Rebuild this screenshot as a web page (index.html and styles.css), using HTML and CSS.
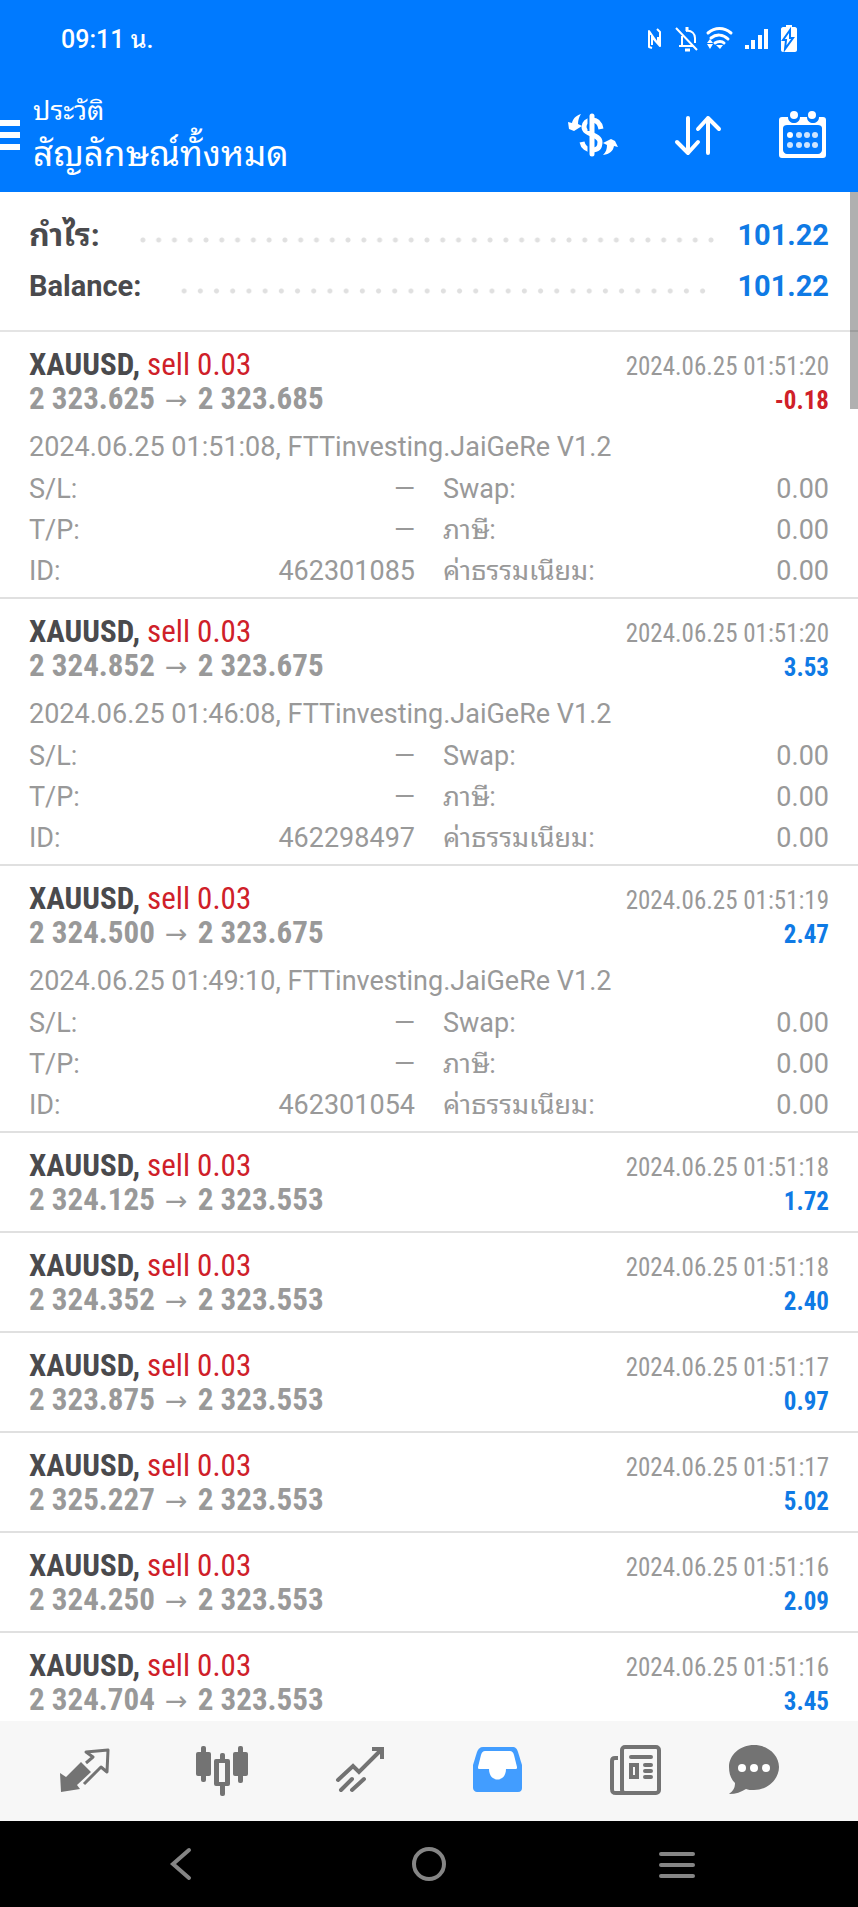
FILE: index.html
```html
<!DOCTYPE html>
<html lang="th">
<head>
<meta charset="utf-8">
<meta name="viewport" content="width=device-width, initial-scale=1">
<title>ประวัติ</title>
<link rel="stylesheet" href="styles.css">
</head>
<body>
<header class="top">
  <div class="status">
    <span class="clock">09:11 น.</span>
    <svg class="status-icons" width="152" height="30" viewBox="0 0 152 30" fill="none" stroke="#fff" stroke-width="2" aria-hidden="true">
      <path d="M7 24l-3-1V7l9 13v-7M7 13l8 9V8l-3-3M7 11v10" stroke-linejoin="round"/>
      <path d="M34 22h14M37 21v-9M41 7c6-1 9 3 9 7v5M31 4l21 22"/>
      <path d="M40 26h5M42 3v4" stroke-width="3"/>
      <path d="M63 9c7-6 16-6 23 0M66 14c5-4 12-4 17 1M70 19c3-2 7-2 9 0" stroke-width="3" stroke-linecap="round"/>
      <path d="M62 19l3-4 3 4zM62 20l3 5 3-5zM71 21h7l-3 4z" fill="#fff" stroke="none"/>
      <path d="M100 21h4v4h-4zM106 16h4v9h-4zM113 11h4v14h-4zM119 5h4v20h-4z" fill="#fff" stroke="none"/>
      <path d="M136 5c0-1 1-2 2-2h3V1h6v2h3c1 0 2 1 2 2v21c0 1-1 2-2 2h-12c-1 0-2-1-2-2z" fill="#fff" stroke="none"/>
      <path d="M145 6l-7 10h3l-1 9 8-11h-3z" fill="#fff" stroke="#007aff" stroke-width="2"/>
    </svg>
  </div>
  <div class="bar">
    <button class="menu" type="button" aria-label="Menu"><span></span><span></span><span></span></button>
    <div class="heading"><p class="kicker">ประวัติ</p><h1>สัญลักษณ์ทั้งหมด</h1></div>
    <div class="actions">
      <button class="act" type="button" aria-label="Currency"><svg width="52" height="48" viewBox="0 0 52 48" fill="none" stroke="#fff"><path d="M35 18c-1-6-4-9-9-9-5 0-8 3-8 7 0 8 16 7 16 15 0 6-3 8-8 8-5 0-9-3-10-8" stroke-width="5"/><path d="M23 3v17M23 27v17" stroke="#007aff" stroke-width="3"/><path d="M26 5v38" stroke-width="5" stroke-linecap="round"/><path d="M15 3c-6 2-8 5-9 9l-4-1 1 7 5 2 8-5-4-2c0-4 1-7 3-10zM37 44c7-1 10-4 11-9l4 1-3-6-4-2-8 4 4 2c0 4-1 7-4 10z" fill="#fff" stroke="none"/></svg></button>
      <button class="act" type="button" aria-label="Sort"><svg width="52" height="48" viewBox="0 0 52 48" fill="none" stroke="#fff" stroke-width="4" stroke-linecap="round" stroke-linejoin="round"><path d="M16 7v35M5 31l11 11 10-11M36 42V7M26 18L36 7l11 11"/></svg></button>
      <button class="act" type="button" aria-label="Calendar"><svg width="52" height="52" viewBox="0 0 52 52"><path fill="#fff" fill-rule="evenodd" d="M6 8h4c0 8 12 8 12 0h7c0 8 12 8 12 0h4c2 0 3 1 3 3v35c0 2-1 3-3 3H4c-2 0-3-1-3-3V11c0-2 1-3 3-3zM9 16c-2 0-4 1-4 3v22c0 2 2 4 4 4h31c2 0 4-2 4-4V19c0-2-2-3-4-3z"/><g fill="#fff"><circle cx="16" cy="6" r="4"/><circle cx="34" cy="6" r="4"/><circle cx="12" cy="26" r="3"/><circle cx="21" cy="26" r="3" opacity=".8"/><circle cx="29" cy="26" r="3" opacity=".8"/><circle cx="37" cy="26" r="3" opacity=".8"/><circle cx="12" cy="36" r="3" opacity=".8"/><circle cx="21" cy="36" r="3" opacity=".8"/><circle cx="29" cy="36" r="3" opacity=".8"/><circle cx="37" cy="36" r="3" opacity=".8"/></g></svg></button>
    </div>
  </div>
</header>
<main class="history">
  <section class="summary">
    <div class="sum"><span class="sum-label thai">กำไร:</span><span class="dots"></span><span class="sum-value">101.22</span></div>
    <div class="sum"><span class="sum-label">Balance:</span><span class="dots dots-short"></span><span class="sum-value">101.22</span></div>
  </section>
  <article class="deal detailed">
    <div class="line"><span class="symbol"><b>XAUUSD,</b> <span class="side">sell 0.03</span></span><time>2024.06.25 01:51:20</time></div>
    <div class="line"><span class="prices">2 323.625 <i>→</i> 2 323.685</span><span class="result loss">-0.18</span></div>
    <p class="comment">2024.06.25 01:51:08, FTTinvesting.JaiGeRe V1.2</p>
    <dl class="details">
      <div><dt>S/L:</dt><dd>—</dd></div><div><dt>Swap:</dt><dd>0.00</dd></div>
      <div><dt>T/P:</dt><dd>—</dd></div><div><dt>ภาษี:</dt><dd>0.00</dd></div>
      <div><dt>ID:</dt><dd>462301085</dd></div><div><dt>ค่าธรรมเนียม:</dt><dd>0.00</dd></div>
    </dl>
  </article>
  <article class="deal detailed">
    <div class="line"><span class="symbol"><b>XAUUSD,</b> <span class="side">sell 0.03</span></span><time>2024.06.25 01:51:20</time></div>
    <div class="line"><span class="prices">2 324.852 <i>→</i> 2 323.675</span><span class="result">3.53</span></div>
    <p class="comment">2024.06.25 01:46:08, FTTinvesting.JaiGeRe V1.2</p>
    <dl class="details">
      <div><dt>S/L:</dt><dd>—</dd></div><div><dt>Swap:</dt><dd>0.00</dd></div>
      <div><dt>T/P:</dt><dd>—</dd></div><div><dt>ภาษี:</dt><dd>0.00</dd></div>
      <div><dt>ID:</dt><dd>462298497</dd></div><div><dt>ค่าธรรมเนียม:</dt><dd>0.00</dd></div>
    </dl>
  </article>
  <article class="deal detailed">
    <div class="line"><span class="symbol"><b>XAUUSD,</b> <span class="side">sell 0.03</span></span><time>2024.06.25 01:51:19</time></div>
    <div class="line"><span class="prices">2 324.500 <i>→</i> 2 323.675</span><span class="result">2.47</span></div>
    <p class="comment">2024.06.25 01:49:10, FTTinvesting.JaiGeRe V1.2</p>
    <dl class="details">
      <div><dt>S/L:</dt><dd>—</dd></div><div><dt>Swap:</dt><dd>0.00</dd></div>
      <div><dt>T/P:</dt><dd>—</dd></div><div><dt>ภาษี:</dt><dd>0.00</dd></div>
      <div><dt>ID:</dt><dd>462301054</dd></div><div><dt>ค่าธรรมเนียม:</dt><dd>0.00</dd></div>
    </dl>
  </article>
  <article class="deal">
    <div class="line"><span class="symbol"><b>XAUUSD,</b> <span class="side">sell 0.03</span></span><time>2024.06.25 01:51:18</time></div>
    <div class="line"><span class="prices">2 324.125 <i>→</i> 2 323.553</span><span class="result">1.72</span></div>
  </article>
  <article class="deal">
    <div class="line"><span class="symbol"><b>XAUUSD,</b> <span class="side">sell 0.03</span></span><time>2024.06.25 01:51:18</time></div>
    <div class="line"><span class="prices">2 324.352 <i>→</i> 2 323.553</span><span class="result">2.40</span></div>
  </article>
  <article class="deal">
    <div class="line"><span class="symbol"><b>XAUUSD,</b> <span class="side">sell 0.03</span></span><time>2024.06.25 01:51:17</time></div>
    <div class="line"><span class="prices">2 323.875 <i>→</i> 2 323.553</span><span class="result">0.97</span></div>
  </article>
  <article class="deal">
    <div class="line"><span class="symbol"><b>XAUUSD,</b> <span class="side">sell 0.03</span></span><time>2024.06.25 01:51:17</time></div>
    <div class="line"><span class="prices">2 325.227 <i>→</i> 2 323.553</span><span class="result">5.02</span></div>
  </article>
  <article class="deal">
    <div class="line"><span class="symbol"><b>XAUUSD,</b> <span class="side">sell 0.03</span></span><time>2024.06.25 01:51:16</time></div>
    <div class="line"><span class="prices">2 324.250 <i>→</i> 2 323.553</span><span class="result">2.09</span></div>
  </article>
  <article class="deal">
    <div class="line"><span class="symbol"><b>XAUUSD,</b> <span class="side">sell 0.03</span></span><time>2024.06.25 01:51:16</time></div>
    <div class="line"><span class="prices">2 324.704 <i>→</i> 2 323.553</span><span class="result">3.45</span></div>
  </article>
  <span class="thumb"></span>
</main>
<nav class="tabs">
  <button class="tab" type="button" aria-label="Quotes"><svg width="56" height="56" viewBox="0 0 56 56"><path fill="#737373" d="M3 28l6 4 15-15 10 10-14 13 3 4-19 3z"/><path fill="none" stroke="#f7f7f7" stroke-width="3" d="M24 41l12-12"/><path fill="none" stroke="#737373" stroke-width="3" stroke-linejoin="round" d="M29 18l7-6-7-5 22-2-1 22-6-5-17 17"/></svg></button>
  <button class="tab" type="button" aria-label="Charts"><svg width="56" height="56" viewBox="0 0 56 56" fill="#737373"><rect x="2" y="7" width="15" height="24" rx="2"/><rect x="7" y="1" width="5" height="36" rx="2"/><rect x="39" y="7" width="15" height="24" rx="2"/><rect x="44" y="1" width="5" height="37" rx="2"/><rect x="26" y="8" width="5" height="8" rx="2"/><rect x="26" y="39" width="5" height="12" rx="2"/><path fill-rule="evenodd" d="M22 14h12q2 0 2 2v23q0 2-2 2H22q-2 0-2-2V16q0-2 2-2zM25 18v19h6V18z"/></svg></button>
  <button class="tab" type="button" aria-label="Trade"><svg width="56" height="56" viewBox="0 0 56 56" fill="none" stroke="#737373" stroke-width="4" stroke-linecap="round"><path d="M6 35l15-14 6 6L49 5M9 45l11-11M20 45l12-11"/><path d="M40 4h10v10" stroke-linecap="butt"/></svg></button>
  <button class="tab" type="button" aria-label="History"><svg width="56" height="56" viewBox="0 0 56 56"><path fill="#429dff" fill-rule="evenodd" d="M13 2h29c4 0 5 2 6 5l4 13v23c0 2-1 4-4 4H7c-2 0-4-2-4-4V20L7 7c1-3 3-5 6-5z"/><path fill="#fff" d="M15 6c-2 0-3 1-4 4L8 22c0 1 0 2 1 2h10c0 14 17 14 17 0h10c1 0 1-1 1-2l-3-12c-1-3-2-4-4-4z"/></svg></button>
  <button class="tab" type="button" aria-label="News"><svg width="56" height="56" viewBox="0 0 56 56" fill="none" stroke="#737373" stroke-width="4"><rect x="15" y="2" width="37" height="46" rx="3"/><path d="M11 13H8c-2 0-3 1-3 3v28c0 3 1 4 4 4h10"/><path stroke-linecap="round" d="M24 12h20M38 20h6M38 26h6M38 32h6"/><rect x="24" y="20" width="6" height="12"/></svg></button>
  <button class="tab tab-last" type="button" aria-label="Messages"><svg width="56" height="56" viewBox="0 0 56 56"><path fill="#737373" d="M28 0c14 0 25 10 25 22S42 45 28 45c-3 0-6 0-8-1-5 3-10 5-17 5 4-3 6-6 6-11-4-4-6-9-6-16C3 10 14 0 28 0z"/><g fill="#fff"><circle cx="16" cy="23" r="4"/><circle cx="28" cy="23" r="4"/><circle cx="40" cy="23" r="4"/></g></svg></button>
</nav>
<footer class="system">
  <button class="sys" type="button" aria-label="Back"><svg width="40" height="40" viewBox="0 0 40 40"><path d="M28 6L12 20l16 14"/></svg></button>
  <button class="sys" type="button" aria-label="Home"><svg width="40" height="40" viewBox="0 0 40 40"><circle cx="20" cy="20" r="15"/></svg></button>
  <button class="sys" type="button" aria-label="Recent apps"><svg width="40" height="40" viewBox="0 0 40 40"><path d="M4 10h32M4 21h32M4 32h32"/></svg></button>
</footer>
</body>
</html>
```
FILE: styles.css
```css
* { box-sizing: border-box; }
body {
  margin: 0;
  height: 100vh;
  display: flex;
  flex-direction: column;
  background: #fff;
  color: #999;
  font: 27px/41px Roboto, "Noto Sans Thai Looped", Loma, Garuda, Waree, Umpush, "Noto Serif Thai", sans-serif;
}
button { padding: 0; border: 0; background: none; display: flex; align-items: center; justify-content: center; }
p, h1, dl, dd { margin: 0; }

.top { background: #007aff; color: #fff; }
.status { display: flex; justify-content: space-between; align-items: center; height: 78px; padding: 0 61px; }
.clock { font-size: 25px; font-weight: 500; }
.bar { display: flex; align-items: center; height: 114px; padding-right: 28px; }
.menu { flex-direction: column; align-items: stretch; gap: 6px; width: 20px; }
.menu span { height: 6px; background: #fff; }
.heading { flex: 1; padding-left: 13px; }
.kicker { font-size: 27px; line-height: 40px; }
h1 { font-size: 35px; line-height: 48px; font-weight: 400; }
.actions { display: flex; align-items: center; gap: 54px; }

.history { position: relative; flex: 1; min-height: 0; overflow: hidden; }
.summary { padding: 18px 29px; border-bottom: 2px solid #e4e4e4; }
.sum { display: flex; align-items: center; height: 51px; font-size: 29px; font-weight: 700; color: #4a4a4d; }
.thai { font-size: 32px; }
.sum-value { color: #0f7ae5; }
.dots {
  flex: 1;
  height: 16px;
  margin: 8px 18px 0 35px;
  background: radial-gradient(circle, #e0e0e0 2px, transparent 3px) 0 0 / 16px 16px round;
}
.dots-short { margin-right: 26px; }

.deal { padding: 16px 29px 14px; border-bottom: 2px solid #e0e0e0; }
.detailed { padding-bottom: 5px; }
.line {
  display: flex;
  justify-content: space-between;
  align-items: baseline;
  height: 34px;
  font-size: 25px;
  line-height: 34px;
  font-family: "Roboto Condensed", Roboto, sans-serif;
}
.symbol { font-size: 31px; }
.symbol b { color: #4a4a4d; }
.side { color: #cf2029; }
.prices { font-size: 31px; font-weight: 700; }
.prices i { padding: 0 3px; font: 400 27px/34px "DejaVu Sans", sans-serif; }
.result { font-weight: 700; color: #0f7ae5; }
.loss { color: #cf2029; }
.comment { margin-top: 10px; line-height: 43px; }
.details { display: grid; grid-template-columns: 1fr 1fr; column-gap: 28px; }
.details div { display: flex; justify-content: space-between; height: 41px; }
.thumb { position: absolute; top: 0; right: 0; width: 8px; height: 217px; background: #0000004f; }

.tabs { display: flex; height: 100px; padding: 4px 54px 0 16px; background: #f7f7f7; }
.tab { flex: 138; }
.tab-last { flex: 100; }
.system { display: flex; justify-content: center; height: 86px; background: #000; }
.sys { width: 248px; }
.sys svg { fill: none; stroke: #858585; stroke-width: 4; stroke-linecap: round; }
```
